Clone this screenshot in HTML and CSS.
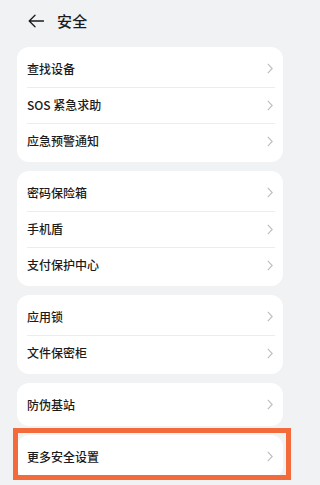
FILE: index.html
```html
<!DOCTYPE html>
<html lang="zh-CN">
<head>
<meta charset="utf-8">
<title>安全</title>
<link rel="stylesheet" href="styles.css">
</head>
<body>
<header class="topbar">
  <svg class="back" width="16" height="14" viewBox="0 0 16 14"><path d="M15.5 7H1.2M7 1.2L1.2 7L7 12.8" fill="none" stroke="#1b1b1b" stroke-width="1.3" stroke-linecap="round" stroke-linejoin="round"/></svg>
  <h1 class="title">安全</h1>
</header>
<main class="list">
  <section class="card">
    <div class="row"><span>查找设备</span><svg class="chev" width="6" height="11" viewBox="0 0 6 11"><path d="M0.8 0.8L5.2 5.5L0.8 10.2" fill="none" stroke="#bdbdbd" stroke-width="1.1"/></svg></div>
    <div class="row"><span>SOS 紧急求助</span><svg class="chev" width="6" height="11" viewBox="0 0 6 11"><path d="M0.8 0.8L5.2 5.5L0.8 10.2" fill="none" stroke="#bdbdbd" stroke-width="1.1"/></svg></div>
    <div class="row"><span>应急预警通知</span><svg class="chev" width="6" height="11" viewBox="0 0 6 11"><path d="M0.8 0.8L5.2 5.5L0.8 10.2" fill="none" stroke="#bdbdbd" stroke-width="1.1"/></svg></div>
  </section>
  <section class="card">
    <div class="row"><span>密码保险箱</span><svg class="chev" width="6" height="11" viewBox="0 0 6 11"><path d="M0.8 0.8L5.2 5.5L0.8 10.2" fill="none" stroke="#bdbdbd" stroke-width="1.1"/></svg></div>
    <div class="row"><span>手机盾</span><svg class="chev" width="6" height="11" viewBox="0 0 6 11"><path d="M0.8 0.8L5.2 5.5L0.8 10.2" fill="none" stroke="#bdbdbd" stroke-width="1.1"/></svg></div>
    <div class="row"><span>支付保护中心</span><svg class="chev" width="6" height="11" viewBox="0 0 6 11"><path d="M0.8 0.8L5.2 5.5L0.8 10.2" fill="none" stroke="#bdbdbd" stroke-width="1.1"/></svg></div>
  </section>
  <section class="card">
    <div class="row"><span>应用锁</span><svg class="chev" width="6" height="11" viewBox="0 0 6 11"><path d="M0.8 0.8L5.2 5.5L0.8 10.2" fill="none" stroke="#bdbdbd" stroke-width="1.1"/></svg></div>
    <div class="row"><span>文件保密柜</span><svg class="chev" width="6" height="11" viewBox="0 0 6 11"><path d="M0.8 0.8L5.2 5.5L0.8 10.2" fill="none" stroke="#bdbdbd" stroke-width="1.1"/></svg></div>
  </section>
  <section class="card">
    <div class="row"><span>防伪基站</span><svg class="chev" width="6" height="11" viewBox="0 0 6 11"><path d="M0.8 0.8L5.2 5.5L0.8 10.2" fill="none" stroke="#bdbdbd" stroke-width="1.1"/></svg></div>
  </section>
  <div class="highlight-wrap">
    <section class="card">
      <div class="row"><span>更多安全设置</span><svg class="chev" width="6" height="11" viewBox="0 0 6 11"><path d="M0.8 0.8L5.2 5.5L0.8 10.2" fill="none" stroke="#bdbdbd" stroke-width="1.1"/></svg></div>
    </section>
    <div class="highlight"></div>
  </div>
</main>
</body>
</html>
```
FILE: styles.css
```css
* { box-sizing: border-box; }
html, body {
  margin: 0;
  padding: 0;
  background: #f1f2f4;
}
body {
  width: 300px;
  height: 485px;
  overflow: hidden;
  font-family: "Noto Sans CJK SC", "Noto Sans", sans-serif;
  color: #1b1b1b;
}
.topbar {
  height: 40px;
  display: flex;
  align-items: center;
  padding: 1px 0 0 28px;
}
.back {
  display: block;
  flex: none;
}
.title {
  margin: 0 0 0 13px;
  font-size: 15px;
  font-weight: 500;
  line-height: 20px;
  letter-spacing: 0.2px;
}
.list {
  display: flex;
  flex-direction: column;
  gap: 9px;
  padding: 7px 17px 0;
}
.card {
  background: #ffffff;
  border-radius: 12px;
  padding: 3.5px 0;
}
.row {
  height: 36px;
  display: flex;
  align-items: center;
  justify-content: space-between;
  margin: 0 8px 0 10px;
  font-size: 12px;
  font-weight: 500;
  line-height: 16px;
}
.row + .row {
  border-top: 1px solid #ececec;
}
.chev {
  display: block;
  flex: none;
  margin-right: 2px;
}
.highlight-wrap {
  position: relative;
}
.highlight {
  position: absolute;
  left: -4px;
  right: -8px;
  top: -7px;
  bottom: -2px;
  border: 5px solid #f36a3b;
  pointer-events: none;
}
```
